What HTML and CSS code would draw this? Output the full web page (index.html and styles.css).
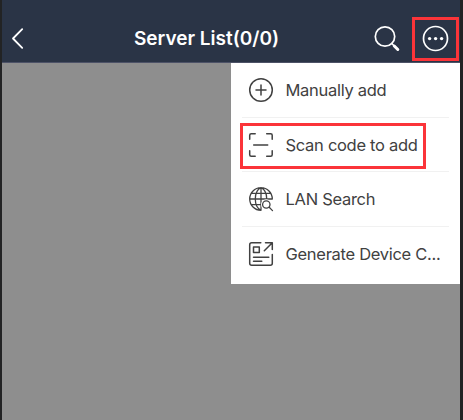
FILE: index.html
```html
<!DOCTYPE html>
<html lang="en">
<head>
<meta charset="utf-8">
<title>Server List</title>
<link rel="stylesheet" href="styles.css">
</head>
<body>
<div class="screen">
  <header class="bar">
    <svg class="back" width="14" height="24" viewBox="0 0 14 24"><path d="M11.2 2.2 2 11.5l9.2 9.3"/></svg>
    <h1 class="title">Server List(0/0)</h1>
    <svg class="search" width="28" height="28" viewBox="0 0 28 28"><circle cx="12" cy="11.5" r="9.7"/><path d="m18.8 18.500 2.500 2.500"/><path class="handle" d="m21.300 21 3.500 3.500"/></svg>
    <div class="more">
      <svg width="28" height="28" viewBox="0 0 28 28"><circle cx="13.500" cy="13.500" r="12"/><g class="dots"><circle cx="7.600" cy="13.600" r="1.700"/><circle cx="13.600" cy="13.600" r="1.700"/><circle cx="19.600" cy="13.600" r="1.700"/></g></svg>
    </div>
  </header>
  <main class="content">
    <nav class="menu">
      <div class="item">
        <svg class="icon" viewBox="0 0 26 26"><circle cx="13" cy="13" r="11.300"/><path d="M8 13h10M13 8v10"/></svg>
        <span class="label">Manually add</span>
      </div>
      <div class="item">
        <svg class="icon" viewBox="0 0 26 26"><path d="M1.700 7.200V3.200q0-1.500 1.500-1.500h4M18.700 1.700h4q1.500 0 1.500 1.500v4M1.700 18.800v4q0 1.500 1.500 1.500h4M18.700 24.300h4q1.500 0 1.500-1.500v-4M5.700 13h14"/></svg>
        <span class="label">Scan code to add</span>
        <span class="mark"></span>
      </div>
      <div class="item">
        <svg class="icon globe" viewBox="0 0 26 26"><path d="M24.300 13A11.300 11.300 0 1 0 13 24.300M13 1.700v22.600M13 1.700C9.200 3.500 7.300 8 7.300 13s1.900 9.500 5.700 11.300M13 1.700c3.800 1.800 5.700 6 5.700 11.300M3.200 7.300h19.600M1.700 13h22.600M3.200 18.700h10.500"/><circle class="gap" cx="18.300" cy="18.500" r="4.600"/><circle cx="18.300" cy="18.500" r="3.700"/><path d="m21.200 21.300 3.300 3.300"/></svg>
        <span class="label">LAN Search</span>
      </div>
      <div class="item">
        <svg class="icon" viewBox="0 0 26 26"><path d="M12.800 1.700H3.700q-2 0-2 2v18.600q0 2 2 2h18.600q2 0 2-2V13.500M17.500 1.700h6.800v6.800M24.300 1.700l-8 8M5.500 6h5.800v5.600H5.500zM5.500 16.200h15.300M5.500 20.300h8.300"/></svg>
        <span class="label">Generate Device C...</span>
      </div>
    </nav>
  </main>
</div>
</body>
</html>
```
FILE: styles.css
```css
* { box-sizing: border-box; }

body {
  margin: 0;
  height: 420px;
  overflow: hidden;
  background: #222324;
  font-family: Inter, "Liberation Sans", sans-serif;
}

.screen {
  display: flex;
  flex-direction: column;
  height: 420px;
  margin: 0 3px 0 2px;
  background: #8e8e8e;
}

svg {
  flex: none;
  fill: none;
  stroke-linecap: round;
  stroke-linejoin: round;
}

.bar {
  display: flex;
  align-items: center;
  height: 63px;
  flex: none;
  padding: 15px 1px 0 9px;
  background: #2a3446;
  border-bottom: 1px solid #4d5267;
  stroke: #fff;
}

.back { stroke-width: 1.8; }

.title {
  flex: 1;
  margin: 0;
  padding: 1px 0 0 109px;
  color: #fff;
  font-size: 19px;
  font-weight: 600;
  line-height: 24px;
  white-space: nowrap;
}

.search {
  margin-right: 11px;
  stroke-width: 1.7;
}

.handle { stroke-width: 3; }

.more {
  display: flex;
  align-items: center;
  justify-content: center;
  width: 47px;
  height: 44px;
  border: 3px solid #fb3439;
  stroke-width: 1.7;
}

.dots {
  fill: #fff;
  stroke: none;
}

.content {
  display: flex;
  justify-content: flex-end;
  align-items: flex-start;
}

.menu {
  display: grid;
  grid-template-rows: 55px 54px 55px 57px;
  width: 229px;
  padding: 0 11px;
  background: #fff;
}

.item {
  position: relative;
  display: flex;
  align-items: center;
  gap: 11.5px;
  padding-left: 6px;
  border-bottom: 1px solid #f1f1f1;
}

.item:last-child {
  padding-bottom: 4px;
  border-bottom: 0;
}

.icon {
  width: 26px;
  height: 26px;
  stroke: #414141;
  stroke-width: 1.5;
}

.globe { stroke-width: 1.3; }

.gap {
  fill: #fff;
  stroke: #fff;
}

.label {
  color: #414141;
  font-size: 16.5px;
  line-height: 22px;
  letter-spacing: -0.29px;
  white-space: nowrap;
}

.mark {
  position: absolute;
  left: -2px;
  top: 5px;
  width: 186px;
  height: 46px;
  border: 3px solid #fb3439;
}
```
